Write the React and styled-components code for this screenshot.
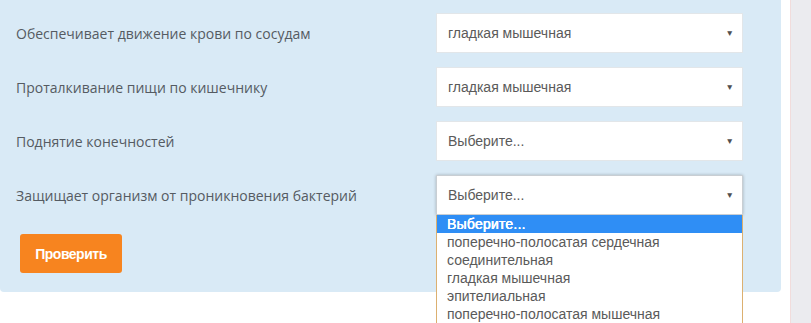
import React from "react";
import styled, { createGlobalStyle } from "styled-components";

const GlobalStyle = createGlobalStyle`
  html, body { margin: 0; padding: 0; background: #ffffff; overflow: hidden; }
  * { box-sizing: border-box; }
`;

const Page = styled.div`
  display: flex;
  width: 811px;
  height: 323px;
  gap: 9px;
`;

const Main = styled.div`
  flex: 0 0 781px;
`;

const Sidebar = styled.div`
  flex: 1;
  background: #ebebef;
  border-left: 1px solid #f1dcdc;
`;

const Panel = styled.form`
  background: #d9eaf6;
  border-radius: 0 0 4px 4px;
  padding: 13px 38px 19px 16px;
`;

const Grid = styled.div`
  display: grid;
  grid-template-columns: 1fr 307px;
  row-gap: 14px;
  align-items: center;
`;

const Label = styled.div`
  font-family: "Open Sans", "Liberation Sans", sans-serif;
  font-size: 14px;
  color: #555b62;
`;

const SelectWrap = styled.div`
  position: relative;
`;

const SelectBox = styled.div`
  height: 40px;
  display: flex;
  align-items: center;
  justify-content: space-between;
  padding: 0 8px 0 11px;
  background: #ffffff;
  border: 1px solid ${(p) => (p.$focused ? "#c9ced3" : "#e2e6e9")};
  box-shadow: ${(p) => (p.$focused ? "0 0 3px rgba(0,0,0,0.25)" : "none")};
  font-family: "Liberation Sans", Arial, sans-serif;
  font-size: 14px;
  color: #5a5a5a;
`;

const Arrow = styled.span`
  font-size: 8.5px;
  color: #4f4f4f;
  line-height: 1;
`;

const List = styled.ul`
  position: absolute;
  top: 100%;
  left: 0;
  width: 100%;
  margin: 0;
  padding: 0;
  list-style: none;
  background: #ffffff;
  border: 1px solid #dcb070;
  border-top: none;
  z-index: 5;
`;

const Option = styled.li`
  height: 18px;
  line-height: 18px;
  padding-left: 10px;
  font-family: "Liberation Sans", Arial, sans-serif;
  font-size: 14px;
  color: ${(p) => (p.$active ? "#ffffff" : "#5a5a5a")};
  background: ${(p) => (p.$active ? "#2f8ef5" : "transparent")};
  text-shadow: ${(p) => (p.$active ? "0 0 0.6px #fff, 0.3px 0 0 #fff" : "none")};
  letter-spacing: ${(p) => (p.$active ? "0.2px" : "0")};
`;

const ButtonRow = styled.div`
  margin-top: 19px;
  padding-left: 4px;
`;

const Button = styled.button`
  height: 39px;
  width: 102px;
  border: none;
  border-radius: 3px;
  background: #f7841f;
  color: #ffffff;
  font-family: "Liberation Sans", Arial, sans-serif;
  font-weight: bold;
  font-size: 14px;
  letter-spacing: -0.5px;
  cursor: pointer;
`;

const rows = [
  { label: "Обеспечивает движение крови по сосудам", value: "гладкая мышечная" },
  { label: "Проталкивание пищи по кишечнику", value: "гладкая мышечная" },
  { label: "Поднятие конечностей", value: "Выберите..." },
  { label: "Защищает организм от проникновения бактерий", value: "Выберите...", open: true },
];

const options = [
  "Выберите...",
  "поперечно-полосатая сердечная",
  "соединительная",
  "гладкая мышечная",
  "эпителиальная",
  "поперечно-полосатая мышечная",
];

export default function App() {
  return (
    <>
      <GlobalStyle />
      <Page>
        <Main>
          <Panel onSubmit={(e) => e.preventDefault()}>
            <Grid>
              {rows.map((r, i) => (
                <React.Fragment key={i}>
                  <Label>{r.label}</Label>
                  <SelectWrap>
                    <SelectBox $focused={r.open}>
                      <span>{r.value}</span>
                      <Arrow>▼</Arrow>
                    </SelectBox>
                    {r.open && (
                      <List>
                        {options.map((o, j) => (
                          <Option key={j} $active={j === 0}>
                            {o}
                          </Option>
                        ))}
                      </List>
                    )}
                  </SelectWrap>
                </React.Fragment>
              ))}
            </Grid>
            <ButtonRow>
              <Button type="submit">Проверить</Button>
            </ButtonRow>
          </Panel>
        </Main>
        <Sidebar />
      </Page>
    </>
  );
}
